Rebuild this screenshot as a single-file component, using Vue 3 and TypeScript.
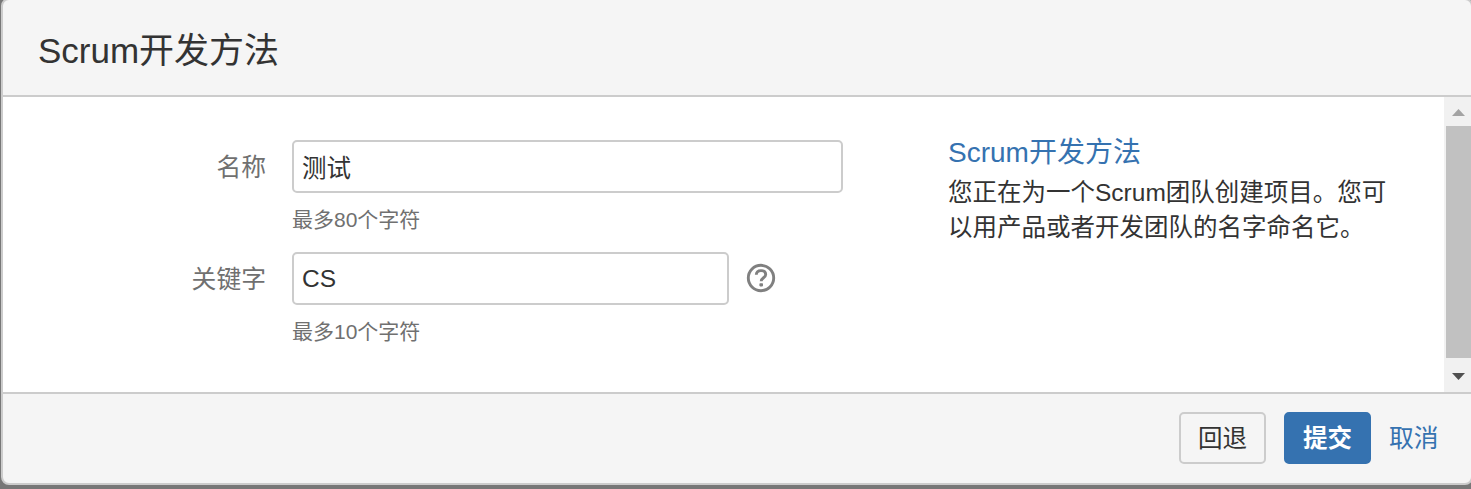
<script setup lang="ts">
import { ref } from 'vue'

const projectName = ref<string>('测试')
const projectKey = ref<string>('CS')
</script>

<template>
  <div class="page">
    <section class="dialog">
      <header class="dialog-header">
        <h2>Scrum开发方法</h2>
      </header>

      <div class="dialog-body">
        <form class="form" @submit.prevent>
          <div class="field">
            <label for="name">名称</label>
            <div class="control">
              <input id="name" v-model="projectName" class="wide" type="text" />
              <p class="hint">最多80个字符</p>
            </div>
          </div>
          <div class="field">
            <label for="key">关键字</label>
            <div class="control">
              <div class="row">
                <input id="key" v-model="projectKey" class="medium" type="text" />
                <svg class="help" viewBox="0 0 30 30" fill="none">
                  <circle cx="15" cy="15" r="12.7" stroke="#808080" stroke-width="2.9" />
                  <path
                    d="M10.3 11.8C10.4 9.1 12.2 7.6 15 7.6c2.8 0 4.7 1.5 4.7 3.9 0 3.3-4.5 3.2-4.5 6.8"
                    stroke="#808080"
                    stroke-width="2.9"
                  />
                  <rect x="13.4" y="20.2" width="3.6" height="3.2" rx=".8" fill="#808080" />
                </svg>
              </div>
              <p class="hint">最多10个字符</p>
            </div>
          </div>
        </form>

        <aside class="about">
          <h3>Scrum开发方法</h3>
          <p>您正在为一个Scrum团队创建项目。您可<br />以用产品或者开发团队的名字命名它。</p>
        </aside>

        <div class="scrollbar">
          <svg class="arrow" viewBox="0 0 27 29"><path d="M8 19h13l-6.5-7z" fill="#a3a3a3" /></svg>
          <div class="thumb"></div>
          <svg class="arrow down" viewBox="0 0 27 34"><path d="M8 15h13l-6.5 7z" fill="#505050" /></svg>
        </div>
      </div>

      <footer class="dialog-footer">
        <button class="button" type="button">回退</button>
        <button class="button primary" type="button">提交</button>
        <a class="cancel">取消</a>
      </footer>
    </section>
  </div>
</template>

<style>
body {
  margin: 0;
  overflow: hidden;
}
</style>

<style scoped>
* {
  box-sizing: border-box;
}

.page {
  height: 489px;
  padding: 0 0 4px 1px;
  overflow: hidden;
  background: #777;
  color: #333;
  font-family: "Liberation Sans", "Noto Sans CJK SC", sans-serif;
  font-size: 24.5px;
}

.dialog {
  display: flex;
  flex-direction: column;
  width: 1472px;
  height: 487px;
  margin-top: -2px;
  overflow: hidden;
  border: 2px solid #ccc;
  border-radius: 8px;
  background: #f5f5f5;
}

.dialog-header {
  display: flex;
  align-items: center;
  flex: none;
  height: 97px;
  padding: 6px 0 0 35px;
  border-bottom: 2px solid #ccc;
}

h2,
h3,
p {
  margin: 0;
  font-weight: 400;
}

h2 {
  font-size: 35px;
  line-height: 46px;
}

.dialog-body {
  display: flex;
  flex: none;
  height: 295px;
  background: #fff;
}

.form {
  flex: none;
  width: 945px;
  padding-top: 43px;
}

.field {
  display: flex;
  height: 112px;
}

label {
  flex: none;
  width: 263px;
  margin-right: 26px;
  color: #707070;
  font-size: 24.8px;
  line-height: 55px;
  text-align: right;
}

.row {
  display: flex;
  align-items: center;
  gap: 17px;
}

input {
  display: block;
  height: 53px;
  padding: 0 8px;
  border: 2px solid #ccc;
  border-radius: 5px;
  outline: none;
  background: #fff;
  color: #333;
  font: inherit;
}

.wide {
  width: 551px;
}

.medium {
  width: 437px;
}

.help {
  width: 30px;
  height: 30px;
  margin-bottom: 2px;
}

.hint {
  margin-top: 11px;
  color: #707070;
  font-size: 21px;
  line-height: 32px;
}

.about {
  flex: 1;
  padding-top: 38px;
  white-space: nowrap;
}

h3 {
  color: #3572b0;
  font-size: 28px;
  line-height: 36px;
}

.about p {
  line-height: 35px;
  padding-top: 4px;
}

.scrollbar {
  display: flex;
  flex-direction: column;
  flex: none;
  width: 27px;
  background: #f1f1f1;
}

.arrow {
  flex: none;
  width: 27px;
  height: 29px;
}

.arrow.down {
  height: 34px;
}

.thumb {
  flex: 1;
  margin-left: 2px;
  background: #c1c1c1;
}

.dialog-footer {
  display: flex;
  align-items: flex-start;
  flex: 1;
  justify-content: flex-end;
  padding: 18px 32px 0 0;
  border-top: 2px solid #ccc;
}

.button {
  width: 87px;
  height: 52px;
  margin-right: 18px;
  padding: 0;
  border: 2px solid #ccc;
  border-radius: 5px;
  background: #f5f5f5;
  color: #333;
  font: inherit;
  line-height: 49px;
}

.primary {
  border-color: #3572b0;
  background: #3572b0;
  color: #fff;
  font-weight: 700;
}

.cancel {
  width: 50px;
  color: #3572b0;
  font-size: 24.8px;
  line-height: 53px;
}
</style>
